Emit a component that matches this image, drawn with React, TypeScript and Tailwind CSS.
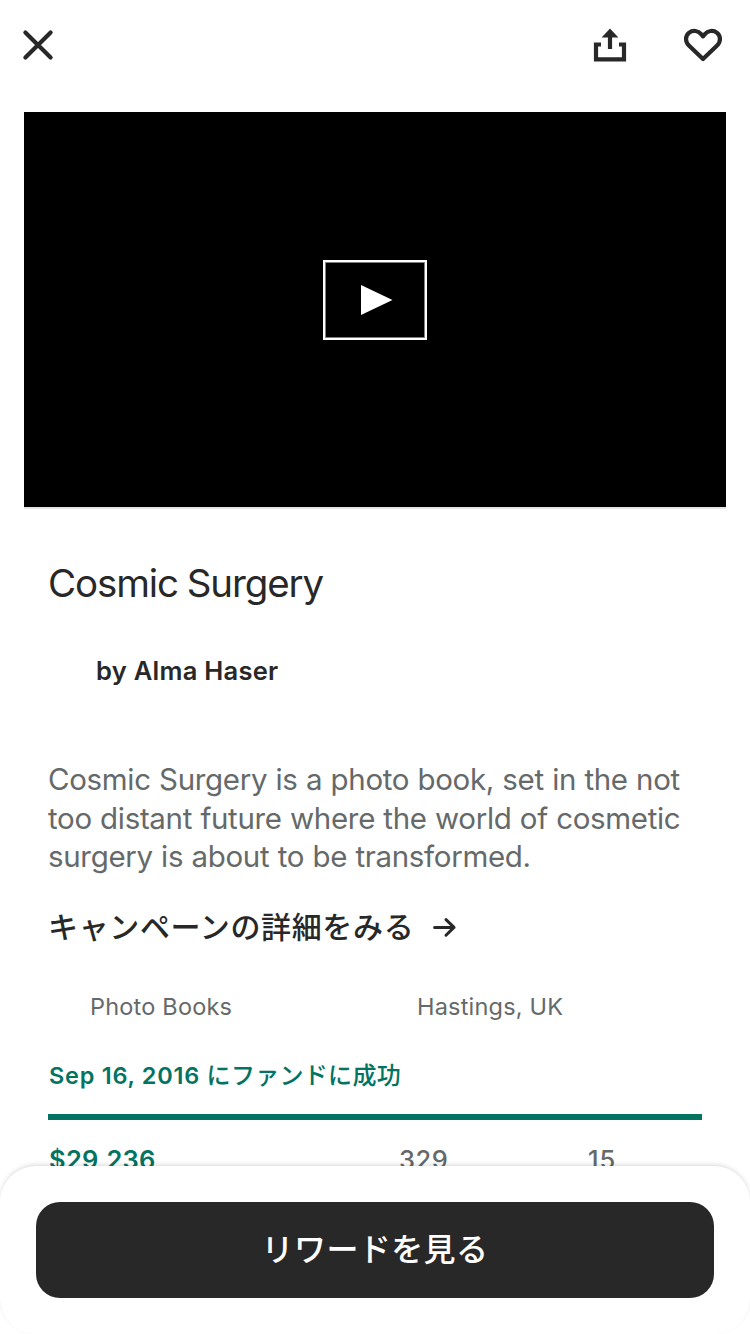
import React from "react";

function CloseIcon() {
  return (
    <svg width="32" height="32" viewBox="0 0 32 32" fill="none" stroke="#282828" strokeWidth="4.2" strokeLinecap="round">
      <path d="M3.4 3.4 28.6 28.6M28.6 3.4 3.4 28.6" />
    </svg>
  );
}

function ShareIcon() {
  return (
    <svg width="36" height="36" viewBox="0 0 36 36" fill="none">
      <path d="M9 17.5H4V32.4H32V17.5H27" stroke="#282828" strokeWidth="4.2" />
      <path d="M18 22V9" stroke="#282828" strokeWidth="4.2" />
      <path d="M18 1.4 26.4 10.4H9.6Z" fill="#282828" />
    </svg>
  );
}

function HeartIcon() {
  return (
    <svg width="40" height="36" viewBox="0 0 40 36" fill="none">
      <path
        d="M20 32 5.9 18.5C2.1 14.8 2.1 9 5.9 5.9 9.8 2.8 15.3 3.6 18.1 7.1L20 9.4 21.9 7.1C24.7 3.6 30.2 2.8 34.1 5.9 37.9 9 37.9 14.8 34.1 18.5Z"
        stroke="#282828"
        strokeWidth="4.2"
        strokeLinejoin="round"
      />
    </svg>
  );
}

function ArrowIcon() {
  return (
    <svg width="26" height="24" viewBox="0 0 26 24" fill="none" stroke="#282828" strokeWidth="3" strokeLinecap="round" strokeLinejoin="round">
      <path d="M2.6 12.4H22M14 4.6 22 12.4 14 20.2" />
    </svg>
  );
}

export default function App() {
  return (
    <main className="relative flex h-[1334px] w-[750px] flex-col overflow-hidden bg-white font-['Inter','Noto_Sans_CJK_JP',sans-serif] text-[#282828]">
      <header className="flex h-[112px] shrink-0 items-center pr-[27px] pb-[22px] pl-[22px]">
        <button aria-label="Close">
          <CloseIcon />
        </button>
        <div className="ml-auto flex items-center gap-[55px]">
          <button aria-label="Share">
            <ShareIcon />
          </button>
          <button aria-label="Save">
            <HeartIcon />
          </button>
        </div>
      </header>

      <section className="mx-6 flex h-[397px] shrink-0 items-center justify-center border-b-2 border-[#e4e4e4] bg-black">
        <button
          aria-label="Play"
          className="mt-[-19px] flex h-20 w-[104px] items-center justify-center border-2 border-white shadow-[inset_0_0_0_1px_#808080]"
        >
          <svg width="32" height="30" viewBox="0 0 32 30" className="ml-[3px]">
            <path d="M0 0 31.5 15 0 30Z" fill="#fff" />
          </svg>
        </button>
      </section>

      <section className="flex flex-col px-12 pt-[50px]">
        <h1 className="h-12 text-[38.5px] leading-[48px] tracking-[-1.1px] [word-spacing:-1px] whitespace-nowrap">Cosmic Surgery</h1>
        <p className="mt-12 h-8 pl-12 text-[25.5px] leading-8 font-semibold tracking-[0.27px] whitespace-nowrap">
          by Alma Haser
        </p>
        <p className="mt-[73px] h-[116px] text-[29.5px] leading-[38.5px] tracking-[-0.33px] [word-spacing:0.4px] whitespace-nowrap text-[#656969]">
          Cosmic Surgery is a photo book, set in the not
          <br />
          too distant future where the world of cosmetic
          <br />
          surgery is about to be transformed.
        </p>
        <a className="mt-[31px] flex h-10 items-center gap-[18px] text-[30px] leading-10 font-medium tracking-[0.65px] whitespace-nowrap">
          キャンペーンの詳細をみる
          <ArrowIcon />
        </a>
        <div className="mt-11 grid h-8 grid-cols-2 text-[23.5px] leading-8 tracking-[0.2px] text-[#656969]">
          <span className="pl-[42px]">Photo Books</span>
          <span className="pl-[42px]">Hastings, UK</span>
        </div>
        <p className="mt-[37px] h-8 pl-px text-[23.5px] leading-8 font-semibold tracking-[0.74px] whitespace-nowrap text-[#037362]">
          Sep 16, 2016 <span className="text-[24px] font-medium tracking-[0.3px]">にファンドに成功</span>
        </p>
        <div className="mt-[22px] h-1.5 bg-[#037362]" />
        <div className="mt-6 flex h-8 pl-px text-[25.5px] leading-8 font-semibold tracking-[0.3px] text-[#656969]">
          <span className="w-[350px] text-[#037362]">$29,236</span>
          <span className="w-[189px] font-medium tracking-[0.5px]">329</span>
          <span className="font-medium tracking-[1px]">15</span>
        </div>
      </section>

      <footer className="absolute inset-x-0 bottom-0 h-[168px] rounded-[36px] bg-white px-9 pt-9 shadow-[0_-2px_5px_-1px_rgba(0,0,0,0.16)]">
        <button className="flex h-24 w-full items-center justify-center rounded-3xl bg-[#282828] text-[32px] font-medium tracking-[0.4px] text-white">
          リワードを見る
        </button>
      </footer>
    </main>
  );
}
